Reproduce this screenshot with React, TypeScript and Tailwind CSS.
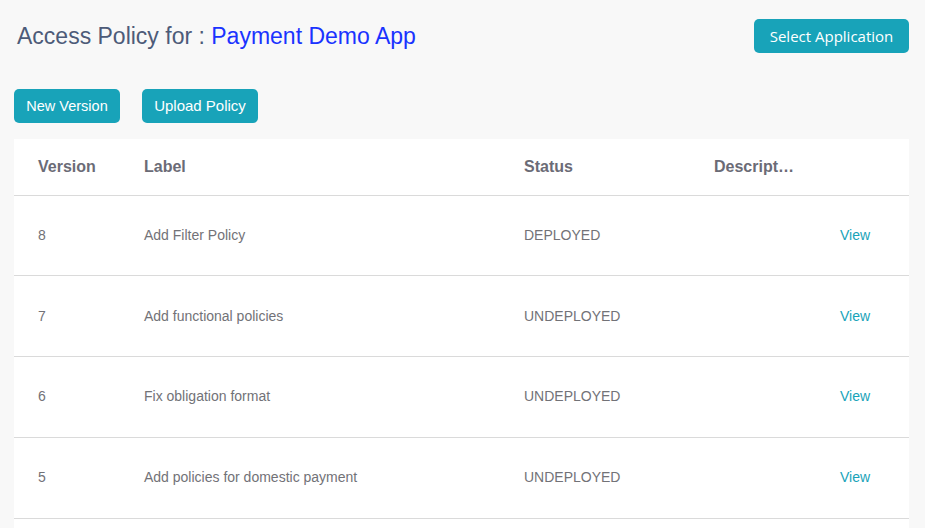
const versions = [
  { version: 8, label: "Add Filter Policy", status: "DEPLOYED" },
  { version: 7, label: "Add functional policies", status: "UNDEPLOYED" },
  { version: 6, label: "Fix obligation format", status: "UNDEPLOYED" },
  { version: 5, label: "Add policies for domestic payment", status: "UNDEPLOYED" },
];

export default function App() {
  return (
    <div className="min-h-screen bg-[#f8f8f8] font-['Liberation_Sans',Arial,sans-serif]">
      <div className="flex items-start justify-between pl-[17px] pr-4 pt-[19px]">
        <h1 className="mt-[3px] text-[23px] leading-[28px] text-[#4d5b78]">
          Access Policy for : <span className="text-[#1a33ff]">Payment Demo App</span>
        </h1>
        <button className="h-[34px] w-[155px] rounded-[5px] bg-[#18a3b9] text-[15px] text-white font-['Open_Sans',sans-serif]">
          Select Application
        </button>
      </div>

      <div className="mt-[36px] flex gap-[22px] px-[14px]">
        <button className="h-[34px] w-[106px] rounded-[5px] bg-[#18a3b9] pt-px text-[14.5px] text-white">
          New Version
        </button>
        <button className="h-[34px] w-[116px] rounded-[5px] bg-[#18a3b9] text-[15px] text-white">
          Upload Policy
        </button>
      </div>

      <div className="mx-[14px] mt-[16px] w-[895px] bg-white pb-[12px]">
        <table className="w-full table-fixed border-collapse">
          <colgroup>
            <col className="w-[106px]" />
            <col className="w-[380px]" />
            <col className="w-[190px]" />
            <col className="w-[126px]" />
            <col className="w-[93px]" />
          </colgroup>
          <thead>
            <tr className="h-[56px] border-b border-[#dadada] text-left text-[16px] font-bold text-[#6b6b76]">
              <th className="pl-6">Version</th>
              <th className="pl-6">Label</th>
              <th className="pl-6">Status</th>
              <th className="truncate pl-6 pr-[20px]">Description</th>
              <th />
            </tr>
          </thead>
          <tbody>
            {versions.map((v) => (
              <tr key={v.version} className="h-[80.75px] border-b border-[#dadada] text-[14px] text-[#727277]">
                <td className="pl-6">{v.version}</td>
                <td className="pl-6">{v.label}</td>
                <td className="pl-6">{v.status}</td>
                <td className="pl-6" />
                <td className="pl-6">
                  <a className="cursor-pointer text-[#18a3b9]">View</a>
                </td>
              </tr>
            ))}
          </tbody>
        </table>
      </div>
    </div>
  );
}
